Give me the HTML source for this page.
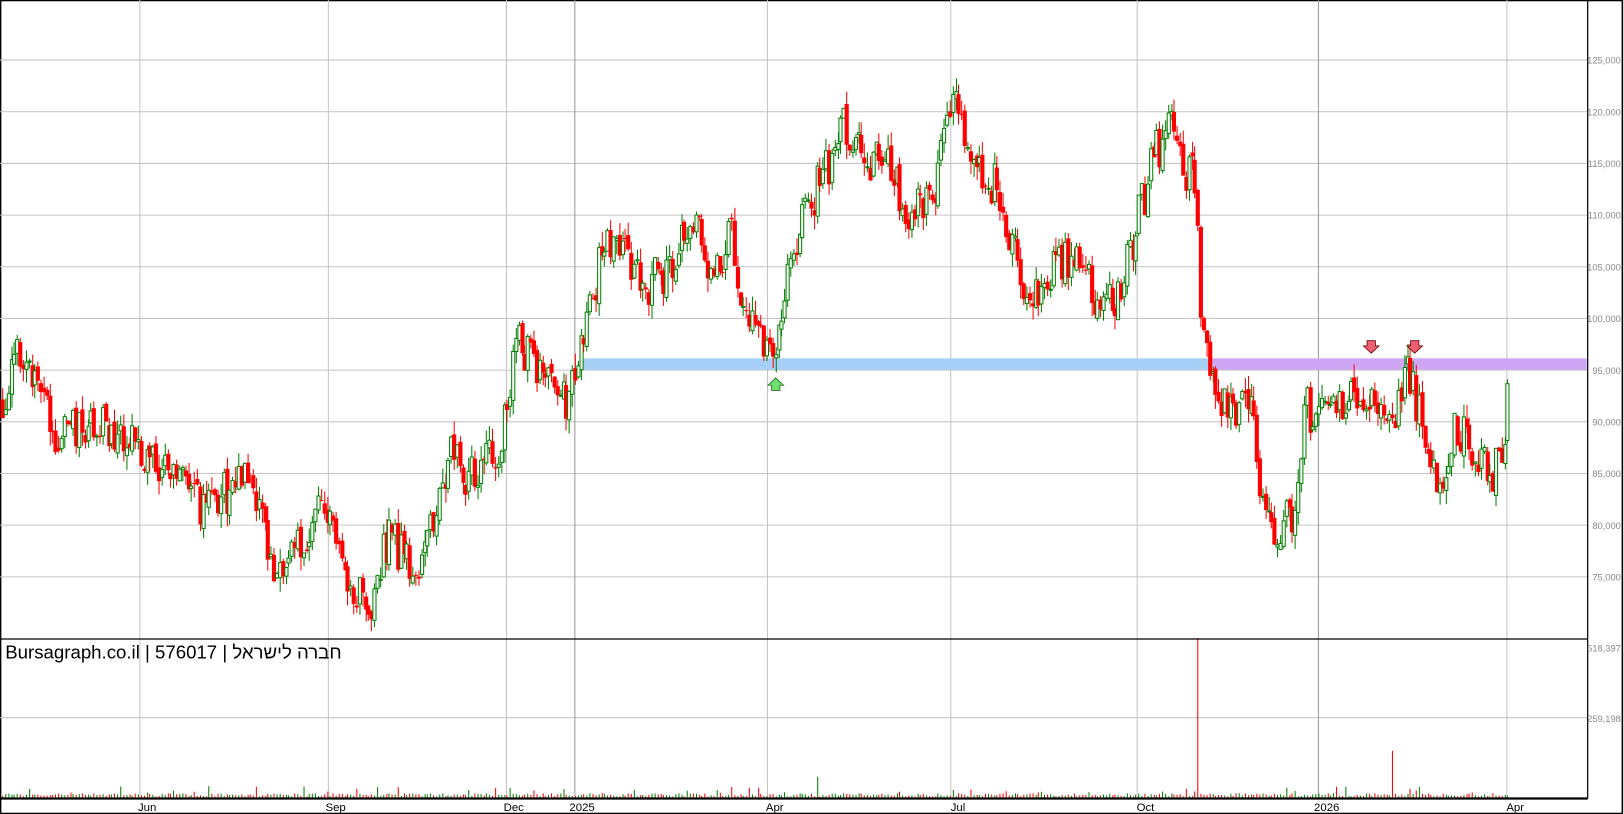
<!DOCTYPE html>
<html><head><meta charset="utf-8"><style>
html,body{margin:0;padding:0;background:#fff;width:1624px;height:814px;overflow:hidden}
svg{display:block}
</style></head><body>
<svg id="c" width="1624" height="814" viewBox="0 0 1568 786" xmlns="http://www.w3.org/2000/svg" font-family="Liberation Sans, Arial, sans-serif">
<rect x="0.5" y="0.5" width="1566" height="785" fill="#fff" stroke="#000" stroke-width="1.5"/>
<g id="grid"></g>
<rect x="563" y="346" width="608" height="11" fill="#a6d0f8"/>
<rect x="1171" y="346" width="361" height="11" fill="#cfa6f5"/>
<g id="candles"></g>
<g id="vol"></g>
<line x1="0" y1="617" x2="1533" y2="617" stroke="#000" stroke-width="1.2"/>
<line x1="0" y1="771" x2="1533" y2="771" stroke="#000" stroke-width="2.2"/>
<text x="5" y="636" font-size="18" fill="#000">Bursagraph.co.il | 576017 | <tspan font-family="Liberation Sans, DejaVu Sans, sans-serif">חברה לישראל</tspan></text>
<text x="1565" y="629" font-size="9" fill="#888" text-anchor="end">518,397</text>
<text x="1565" y="697" font-size="9" fill="#888" text-anchor="end">259,198</text>
<g font-size="11" fill="#000" text-anchor="middle">
<text x="142" y="783">Jun</text><text x="324" y="783">Sep</text><text x="496" y="783">Dec</text><text x="562" y="783">2025</text>
<text x="748" y="783">Apr</text><text x="925" y="783">Jul</text><text x="1106" y="783">Oct</text><text x="1281" y="783">2026</text><text x="1463" y="783">Apr</text>
</g>
<g id="arrows">
<path d="M745,365 h8 v5 h3.5 l-7.5,7 l-7.5,-7 h3.5z" transform="rotate(180 749 371)" fill="#6fe06f" stroke="#1a6b1a" stroke-width="0.8"/>
<path d="M1320,329 h8 v5 h3.5 l-7.5,7 l-7.5,-7 h3.5z" fill="#f06070" stroke="#600" stroke-width="0.8"/>
<path d="M1362,329 h8 v5 h3.5 l-7.5,7 l-7.5,-7 h3.5z" fill="#f06070" stroke="#600" stroke-width="0.8"/>
</g>
</svg>
<script>
(function(){
var NS="http://www.w3.org/2000/svg";
function el(t,a,p){var e=document.createElementNS(NS,t);for(var k in a)e.setAttribute(k,a[k]);p.appendChild(e);return e;}
var grid=document.getElementById('grid');
function py(p){return 58+(125000-p)/5000*49.9;}
for(var p=75000;p<=125000;p+=5000){var y=py(p);
 el('line',{x1:0,y1:y,x2:1533,y2:y,stroke:'#c4c4c4','stroke-width':1},grid);
 var t=el('text',{x:1565,y:y+3.5,'font-size':'9',fill:'#888','text-anchor':'end'},grid);t.textContent=(p/1000)+',000';}
el('line',{x1:0,y1:693,x2:1533,y2:693,stroke:'#c4c4c4','stroke-width':1},grid);
[135,317,489,741,918,1098,1455].forEach(function(x){el('line',{x1:x,y1:0,x2:x,y2:771,stroke:'#c4c4c4','stroke-width':1},grid);});
[555,1273].forEach(function(x){el('line',{x1:x,y1:0,x2:x,y2:771,stroke:'#999','stroke-width':1},grid);});
el('line',{x1:1533,y1:0,x2:1533,y2:771,stroke:'#000','stroke-width':1.2},grid);
var s=123456789;function r(){s^=s<<13;s^=s>>>17;s^=s<<5;return ((s>>>0)%100000)/100000;}
var K=[[2,92000],[10,95000],[20,97500],[40,93000],[55,88000],[90,90000],[120,88000],[160,85000],[200,81000],[240,86000],[255,80000],[265,73500],[290,78000],[310,82000],[330,76000],[355,72000],[375,79000],[400,76000],[420,80000],[435,87000],[450,85000],[480,87000],[500,98000],[520,94000],[550,92000],[565,99000],[580,106000],[600,107000],[620,103000],[650,105000],[665,110000],[690,104000],[705,109000],[720,100000],[745,96000],[760,105000],[780,111000],[800,115000],[810,119000],[830,116000],[860,114000],[880,110000],[900,112000],[920,121000],[940,114000],[960,113000],[975,108000],[990,101000],[1010,104000],[1040,107000],[1060,100000],[1080,103000],[1100,110000],[1115,116000],[1130,119000],[1145,114000],[1155,114000],[1158,100000],[1170,94000],[1185,91000],[1210,91000],[1215,84000],[1230,79000],[1250,81000],[1260,91000],[1290,92000],[1310,93000],[1330,92000],[1345,90000],[1360,95000],[1375,89000],[1390,83000],[1405,90000],[1420,88000],[1435,85000],[1450,86000],[1455,92000]];
function interp(x){for(var i=1;i<K.length;i++){if(x<=K[i][0]){var a=K[i-1],b=K[i];return a[1]+(b[1]-a[1])*(x-a[0])/(b[0]-a[0]);}}return K[K.length-1][1];}
var cg=document.getElementById('candles'),vg=document.getElementById('vol');
var prev=interp(2);
for(var x=2;x<=1456;x+=2.85){
 var o=prev+(r()-0.5)*900;
 var c=interp(x)+(r()-0.5)*4500;
 var hi=Math.max(o,c)+r()*1400,lo=Math.min(o,c)-r()*1400;
 var up=c>=o,col=up?'#008000':'#ff0000';
 var xx=Math.round(x)+0.5;
 el('line',{x1:xx,y1:py(hi),x2:xx,y2:py(lo),stroke:col,'stroke-width':1},cg);
 var yt=py(Math.max(o,c)),yb=py(Math.min(o,c));
 if(up) el('rect',{x:xx-1.5,y:yt,width:3,height:Math.max(yb-yt,1),fill:'#fff',stroke:col,'stroke-width':1},cg);
 else el('rect',{x:xx-2,y:yt,width:4,height:Math.max(yb-yt,1),fill:col},cg);
 var v=1+r()*3;if(r()<0.1)v+=r()*8;
 if(Math.abs(x-1157)<1.5)v=154;if(Math.abs(x-1343)<1.5)v=45;if(Math.abs(x-789)<1.5)v=20;
 el('line',{x1:xx,y1:770,x2:xx,y2:770-v,stroke:col,'stroke-width':1},vg);
 prev=c;
}
})();
</script>
</body></html>
